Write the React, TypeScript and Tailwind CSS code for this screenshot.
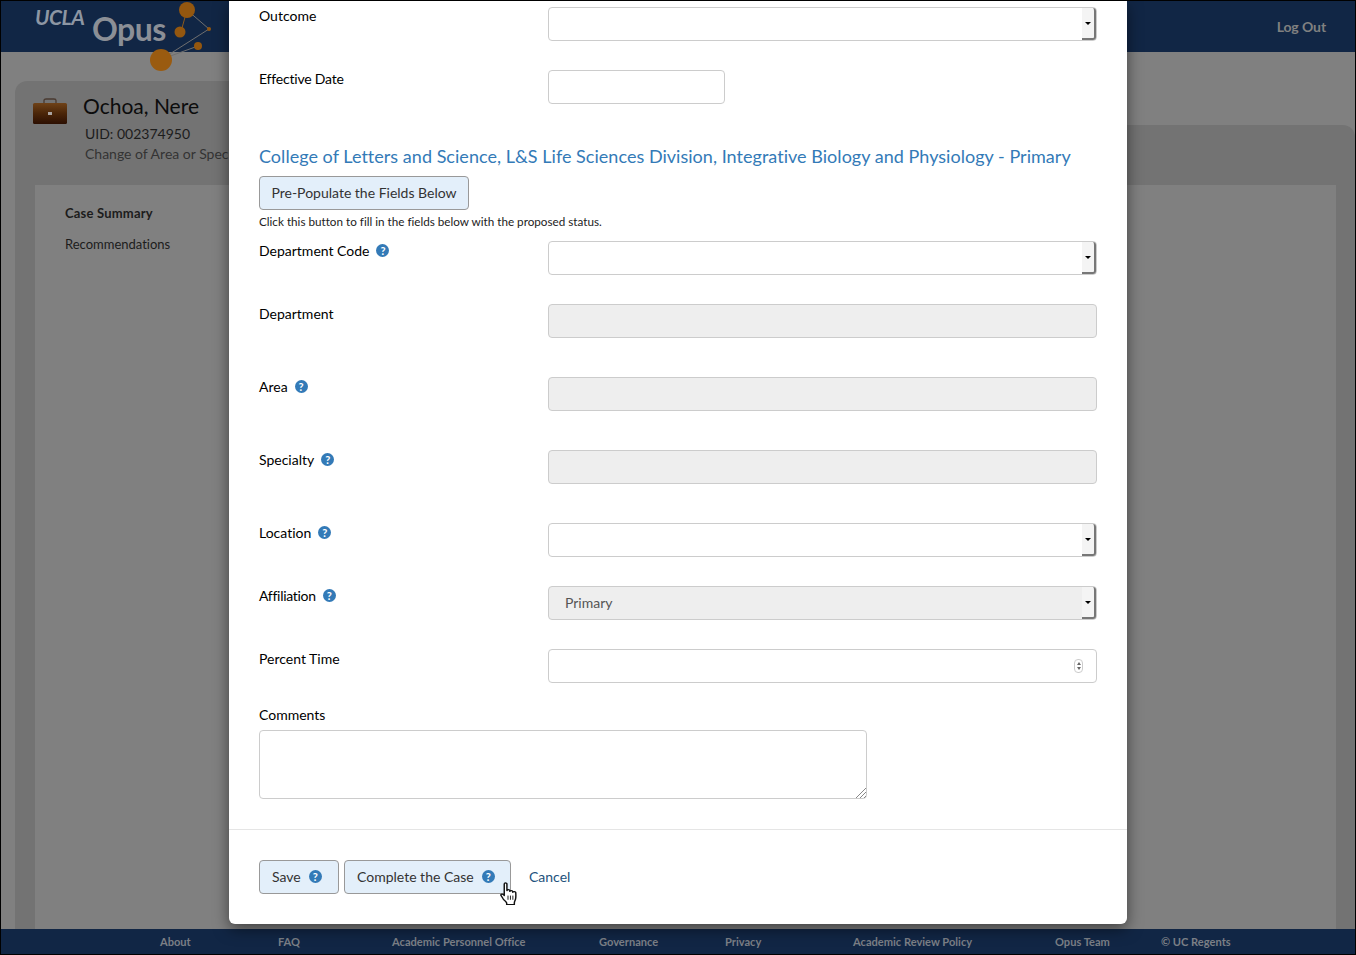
import type { ReactNode } from "react";

const footerLinks = [
  { label: "About", cls: "w-[118px] ml-[159px]" },
  { label: "FAQ", cls: "w-[114px]" },
  { label: "Academic Personnel Office", cls: "w-[207px]" },
  { label: "Governance", cls: "w-[126px]" },
  { label: "Privacy", cls: "w-[128px]" },
  { label: "Academic Review Policy", cls: "w-[202px]" },
  { label: "Opus Team", cls: "w-[106px]" },
  { label: "© UC Regents", cls: "w-[75px]" },
];

function Help() {
  return (
    <span className="inline-flex h-[13px] w-[13px] items-center justify-center rounded-full bg-[#337ab7] text-[11px] font-bold leading-none text-white">
      ?
    </span>
  );
}

function Row({ label, help, gap, labelTop = "-mt-[1px]", children }: { label: string; help?: boolean; gap: string; labelTop?: string; children: ReactNode }) {
  return (
    <div className={`flex ${gap}`}>
      <div className={`flex h-[20px] w-[289px] items-center gap-[7px] ${labelTop}`}>
        <span>{label}</span>
        {help && <Help />}
      </div>
      {children}
    </div>
  );
}

function SelectBox({ value, disabled }: { value?: string; disabled?: boolean }) {
  return (
    <div className={`flex h-[34px] w-[549px] items-center justify-between rounded-[4px] border border-[#ccc] pl-[16px] text-[#555] ${disabled ? "bg-[#eee]" : "bg-white"}`}>
      <span className="pb-[1px]">{value}</span>
      <div className="flex h-[32px] w-[14px] items-center justify-center rounded-r-[3px] border-r-2 border-b-2 border-[#777] bg-[#f4f4f4]">
        <div className="h-0 w-0 border-x-[3px] border-t-[3px] border-x-transparent border-t-black" />
      </div>
    </div>
  );
}

function TextBox({ wide = true, disabled }: { wide?: boolean; disabled?: boolean }) {
  return (
    <div className={`h-[34px] rounded-[4px] border border-[#ccc] ${wide ? "w-[549px]" : "w-[177px]"} ${disabled ? "bg-[#eee]" : "bg-white"}`} />
  );
}

function Hand() {
  return (
    <svg viewBox="0 0 14 22" preserveAspectRatio="none" className="absolute left-[500px] top-[882px] h-[23px] w-[17px]">
      <path
        d="M3.5 1.8c0-1.2 2.2-1.2 2.2 0v6.4c.2-1.2 2.3-1.2 2.4 0v.8c.2-1.1 2.3-1.1 2.4.1v.8c.3-1 2.4-.9 2.5.3 0 2.2.3 4.7-.3 6.6-.4 1.2-.9 2-.9 3.2v1.6H5.5v-1.6c-.6-1.2-1.8-2.3-2.8-3.7L1 13.2c-.8-1.2.6-2.2 1.6-1.3l.9 1V1.8z"
        fill="#fff"
        stroke="#111"
        strokeWidth="1.2"
        strokeLinejoin="round"
      />
      <path d="M6.6 13v4M8.6 13v4M10.6 13v4" stroke="#111" strokeWidth="0.8" />
    </svg>
  );
}

function Logo() {
  return (
    <div className="absolute left-0 top-0 h-[75px] w-[229px]">
      <span className="absolute left-[35px] top-[5px] text-[21px] font-bold italic leading-[24px] tracking-[-0.5px] text-[#8d96a3]">UCLA</span>
      <span className="absolute left-[92px] top-[9px] text-[32px] font-bold leading-[40px] tracking-[-0.5px] text-[#8b8f96]">Opus</span>
      <svg viewBox="0 0 229 75" className="absolute left-0 top-0 h-[75px] w-[229px]">
        <g stroke="#6f6f6f" strokeWidth="1" fill="none">
          <path d="M187 10 209 29 165 57M198 46 165 58" />
          <path d="M187 10 182 28" stroke="#8d5a1c" />
        </g>
        <circle cx="187" cy="10" r="8" fill="#94570f" />
        <circle cx="180" cy="32" r="5.5" fill="#94570f" />
        <circle cx="209" cy="29" r="2" fill="#94570f" />
        <circle cx="198" cy="46" r="4" fill="#94570f" />
        <circle cx="161" cy="60" r="11" fill="#9a5b10" />
      </svg>
    </div>
  );
}

function Briefcase() {
  return (
    <svg viewBox="0 0 36 28" className="h-[28px] w-[36px]">
      <defs>
        <linearGradient id="bc" x1="0" y1="0" x2="0" y2="1">
          <stop offset="0" stopColor="#6f4218" />
          <stop offset="0.5" stopColor="#4a2508" />
          <stop offset="1" stopColor="#2c0f02" />
        </linearGradient>
      </defs>
      <path d="M12 6V3.500C12 2.500 13 2 14 2h8c1 0 2 .5 2 1.500V6" fill="none" stroke="#4a3a30" strokeWidth="1.300" />
      <rect x="1" y="6" width="34" height="21" rx="1.500" fill="url(#bc)" />
      <rect x="16" y="15" width="4" height="3" fill="#a9a3a0" />
    </svg>
  );
}

export default function App() {
  return (
    <div className="relative h-[955px] w-[1356px] overflow-hidden bg-[#808080] font-['Lato',sans-serif] text-[14px] text-black [font-variant-ligatures:none]">
      {/* page behind the modal */}
      <div className="flex h-full flex-col border border-black">
        <div className="flex h-[51px] shrink-0 items-center justify-end bg-[#112645] pr-[29px] text-[#808080]">
          <span className="font-bold tracking-[-0.1px]">Log Out</span>
        </div>
        <div className="relative flex-1">
          <div className="absolute left-[14px] top-[29px] h-[60px] w-[600px] rounded-t-[12px] bg-[#737373]" />
          <div className="ml-[14px] mt-[73px] flex h-[804px] flex-col rounded-tr-[12px] bg-[#737373]">
            <div className="relative ml-[20px] mr-[19px] mt-[60px] flex-1 bg-[#808080] pl-[30px] pt-[19px] text-[13px] text-[#1c1c1c]">
              <div className="font-bold tracking-[0.2px]">Case Summary</div>
              <div className="mt-[11px]">Recommendations</div>
            </div>
          </div>
          <div className="absolute left-[31px] top-[45px]">
            <Briefcase />
          </div>
          <div className="absolute left-[82px] top-[39px] whitespace-nowrap">
            <div className="text-[21px] leading-[30px] text-[#0c0c0c]">Ochoa, Nere</div>
            <div className="ml-[2px] mt-[3px] leading-[20px] text-[#1c1c1c]">UID: 002374950</div>
            <div className="ml-[2px] leading-[20px] text-[#333]">Change of Area or Specialty</div>
          </div>
        </div>
        <div className="flex h-[25px] shrink-0 items-center whitespace-nowrap bg-[#112645] pt-[2px] text-[11.1px] font-bold text-[#7b7f86]">
          {footerLinks.map((l) => (
            <span key={l.label} className={l.cls}>{l.label}</span>
          ))}
        </div>
      </div>
      <Logo />

      {/* modal */}
      <div className="absolute left-[229px] top-[1px] flex h-[923px] w-[898px] flex-col rounded-b-[6px] bg-white shadow-[0_5px_15px_rgba(0,0,0,0.5)]">
        <div className="h-[828px] px-[30px] pt-[6px]">
          <Row label="Outcome" gap="mb-[29px]" labelTop="-mt-[2px]"><SelectBox /></Row>
          <Row label="Effective Date" gap="mb-[39px]" labelTop="-mt-[2px] tracking-[-0.2px]"><TextBox wide={false} /></Row>
          <h2 className="text-[18px] leading-[26px] tracking-[0.03px] text-[#337ab7]">College of Letters and Science, L&amp;S Life Sciences Division, Integrative Biology and Physiology - Primary</h2>
          <button className="mt-[7px] block h-[34px] w-[210px] rounded-[4px] border border-[#999] bg-[#e3effa] pb-[1px] text-[#333]">Pre-Populate the Fields Below</button>
          <p className="mt-[3px] h-[16px] text-[11.7px] leading-[16px] text-[#222]">Click this button to fill in the fields below with the proposed status.</p>
          <div className="mt-[12px]" />
          <Row label="Department Code" help gap="mb-[29px]"><SelectBox /></Row>
          <Row label="Department" gap="mb-[39px]"><TextBox disabled /></Row>
          <Row label="Area" help gap="mb-[39px]"><TextBox disabled /></Row>
          <Row label="Specialty" help gap="mb-[39px]"><TextBox disabled /></Row>
          <Row label="Location" help gap="mb-[29px]"><SelectBox /></Row>
          <Row label="Affiliation" help gap="mb-[29px]" labelTop="-mt-[1px] tracking-[-0.3px]"><SelectBox value="Primary" disabled /></Row>
          <Row label="Percent Time" gap="mb-[22px]">
            <div className="flex h-[34px] w-[549px] items-center justify-end rounded-[4px] border border-[#ccc] bg-white pr-[13px]">
              <div className="flex h-[14px] w-[9px] flex-col items-center justify-center gap-[2px] rounded-[4px] border border-[#ccc]">
                <div className="h-0 w-0 border-x-[2px] border-b-[3px] border-x-transparent border-b-[#666]" />
                <div className="h-0 w-0 border-x-[2px] border-t-[3px] border-x-transparent border-t-[#666]" />
              </div>
            </div>
          </Row>
          <div className="leading-[20px]">Comments</div>
          <div className="relative mt-[5px] h-[69px] w-[608px] rounded-[4px] border border-[#ccc] bg-white">
            <svg viewBox="0 0 11 11" className="absolute bottom-0 right-0 h-[11px] w-[11px]">
              <path d="M1 11 11 1M5 11l6-6M9 11l2-2" stroke="#888" strokeWidth="1" />
            </svg>
          </div>
        </div>
        <div className="flex flex-1 items-start gap-[5px] border-t border-[#e5e5e5] pl-[30px] pt-[30px]">
          <button className="flex h-[34px] w-[80px] items-center gap-[8px] rounded-[4px] border border-[#999] bg-[#e3effa] pb-[1px] pl-[12px] text-[#333]">Save <Help /></button>
          <button className="flex h-[34px] w-[167px] items-center gap-[8px] rounded-[4px] border border-[#999] bg-[#e3effa] pb-[1px] pl-[12px] text-[#333]">Complete the Case <Help /></button>
          <span className="ml-[13px] leading-[34px] text-[#23527c]">Cancel</span>
        </div>
      </div>
      <Hand />
    </div>
  );
}
